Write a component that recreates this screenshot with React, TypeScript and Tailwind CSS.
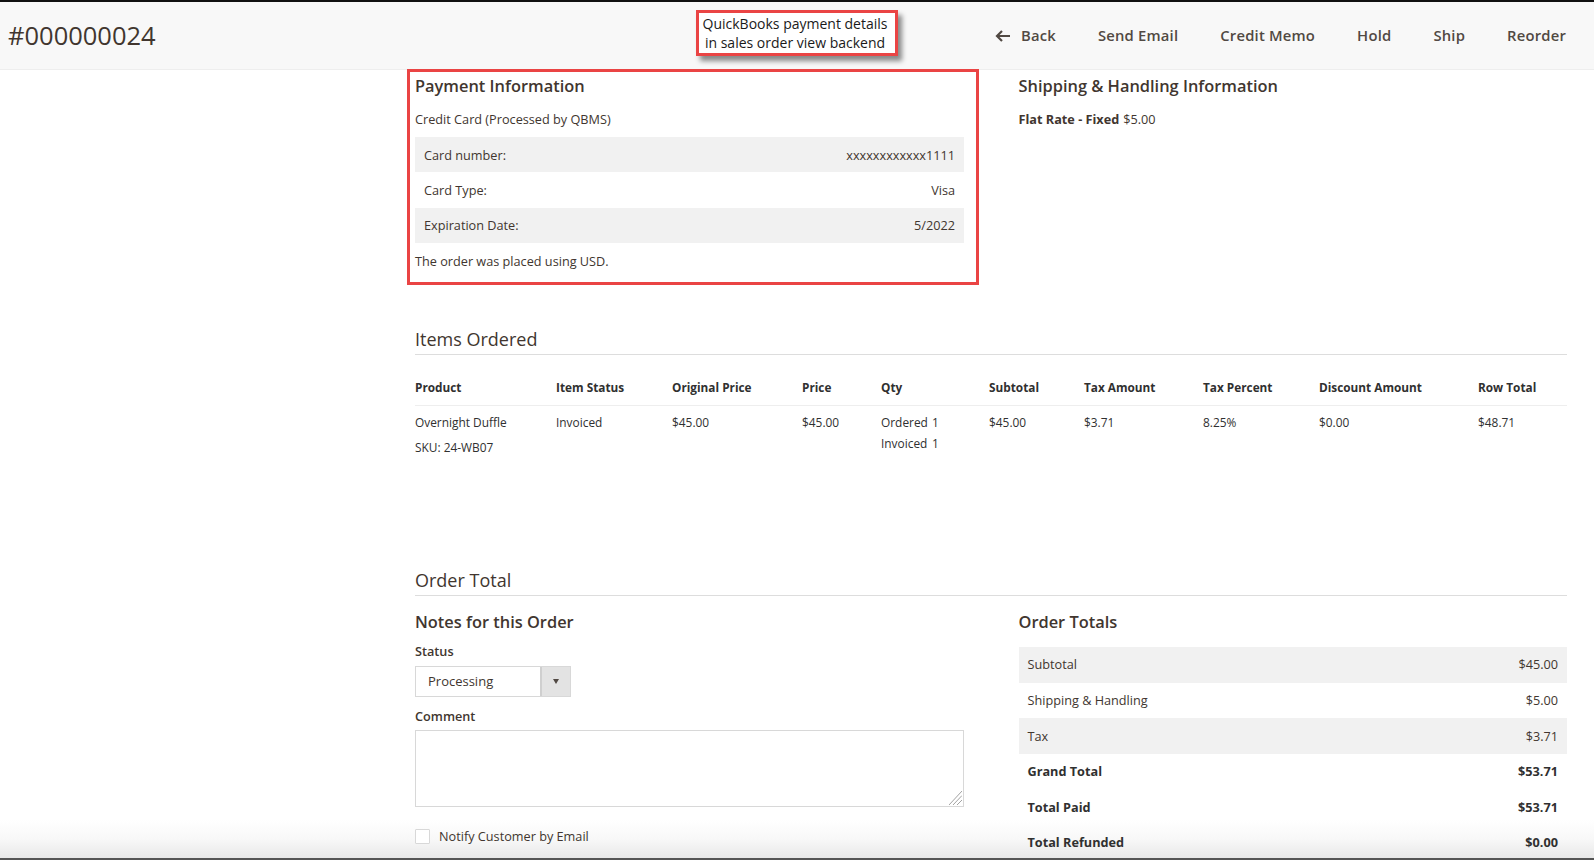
import React from "react";

const F = "font-['Open_Sans',sans-serif]";

function Row({ label, value, shade, bold, tall }: { label: string; value: string; shade?: boolean; bold?: boolean; tall?: boolean }) {
  return (
    <div className={`flex items-center justify-between px-[9px] text-[12.7px] ${tall ? "h-[35.6px]" : "h-[35.4px] pt-[1px]"} ${shade ? "bg-[#f1f1f1]" : ""} ${bold ? "font-bold text-[#303030]" : "text-[#41362f]"}`}>
      <span>{label}</span>
      <span>{value}</span>
    </div>
  );
}

const cols = "grid grid-cols-[141px_116px_130px_79px_108px_95px_119px_116px_159px_1fr]";

export default function App() {
  return (
    <div className={`${F} relative h-[860px] w-[1594px] overflow-hidden bg-white text-[12.7px] text-[#303030]`}>
      <div className="pointer-events-none absolute inset-x-0 bottom-0 h-[40px] border-b-2 border-[#555555] bg-gradient-to-b from-transparent via-[#f8f8f8] to-[#e8e8e8]" />

      <header className="relative flex h-[70px] items-center justify-between border-t-2 border-b border-t-[#111111] border-b-[#eeeeee] bg-[#f8f8f8] pl-[8px] pr-[28px]">
        <h1 className="text-[25.5px] leading-none text-[#41362f]">#000000024</h1>
        <nav className="flex items-center gap-[42px] text-[14.8px] font-semibold tracking-[0.2px] text-[#514943]">
          <span className="flex items-center gap-[11px]">
            <svg width="15" height="12" viewBox="0 0 15 12" fill="none" stroke="#514943" strokeWidth="2.2">
              <path d="M2 6h13M7 1 2 6l5 5" />
            </svg>
            Back
          </span>
          <span>Send Email</span>
          <span>Credit Memo</span>
          <span>Hold</span>
          <span>Ship</span>
          <span>Reorder</span>
        </nav>
      </header>

      <main className="relative pl-[415px] pr-[27px]">
        <section className="flex">
          <div className="w-[549px]">
            <h2 className="flex h-[33px] items-center text-[16.4px] font-semibold text-[#41362f]">Payment Information</h2>
            <p className="flex h-[34px] items-center text-[#41362f]">Credit Card (Processed by QBMS)</p>
            <Row label="Card number:" value="xxxxxxxxxxxx1111" shade />
            <Row label="Card Type:" value="Visa" />
            <Row label="Expiration Date:" value="5/2022" shade />
            <p className="flex h-[36px] items-center text-[#41362f]">The order was placed using USD.</p>
          </div>
          <div className="ml-[54.5px] flex-1">
            <h2 className="flex h-[33px] items-center text-[16.4px] font-semibold text-[#41362f]">Shipping &amp; Handling Information</h2>
            <p className="flex h-[34px] items-center text-[#41362f]">
              <strong className="mr-[4px] font-bold">Flat Rate - Fixed</strong> $5.00
            </p>
          </div>
        </section>

        <section className="mt-[42px]">
          <h2 className="flex h-[34px] items-center border-b border-[#dddddd] pt-[3px] text-[18px] text-[#41362f]">Items Ordered</h2>
          <div className={`${cols} mt-[24px] h-[27px] border-b border-[#eeeeee] text-[11.8px] font-bold leading-[16px] text-[#303030]`}>
            <span>Product</span>
            <span>Item Status</span>
            <span>Original Price</span>
            <span>Price</span>
            <span>Qty</span>
            <span>Subtotal</span>
            <span>Tax Amount</span>
            <span>Tax Percent</span>
            <span>Discount Amount</span>
            <span>Row Total</span>
          </div>
          <div className={`${cols} pt-[8px] text-[11.9px] leading-[16px] text-[#303030]`}>
            <div>
              <div>Overnight Duffle</div>
              <div className="mt-[9px]">SKU: 24-WB07</div>
            </div>
            <span>Invoiced</span>
            <span>$45.00</span>
            <span>$45.00</span>
            <div>
              <div className="flex">
                <span className="w-[51px]">Ordered</span>
                <span>1</span>
              </div>
              <div className="mt-[5px] flex">
                <span className="w-[51px]">Invoiced</span>
                <span>1</span>
              </div>
            </div>
            <span>$45.00</span>
            <span>$3.71</span>
            <span>8.25%</span>
            <span>$0.00</span>
            <span>$48.71</span>
          </div>
        </section>

        <section className="mt-[107px]">
          <h2 className="flex h-[34px] items-center border-b border-[#dddddd] pt-[3px] text-[18px] text-[#41362f]">Order Total</h2>
          <div className="flex">
            <div className="w-[549px]">
              <h2 className="flex h-[46px] items-center pt-[6px] text-[16.4px] font-semibold text-[#41362f]">Notes for this Order</h2>
              <label className="block text-[12.7px] font-semibold leading-[18px] text-[#41362f]">Status</label>
              <div className="mt-[6px] flex h-[31px] w-[156px] border border-[#d8d8d8] bg-white">
                <span className="flex flex-1 items-center pl-[12px] text-[13px] text-[#41362f]">Processing</span>
                <span className="flex w-[30px] items-center justify-center border-l-2 border-[#cfcfcf] bg-[#e3e3e3]">
                  <span className="h-0 w-0 border-x-[3.5px] border-t-[5px] border-x-transparent border-t-[#514943]" />
                </span>
              </div>
              <label className="mt-[10px] block text-[12.7px] font-semibold leading-[18px] text-[#41362f]">Comment</label>
              <div className="relative mt-[5px] h-[77px] border border-[#d8d8d8] bg-white">
                <svg className="absolute bottom-[1px] right-[1px]" width="13" height="15" viewBox="0 0 13 15" stroke="#8a8a8a" strokeWidth="0.8" fill="none">
                  <path d="M0 15 13 1M4 15 13 5.5M8 15 13 10" />
                </svg>
              </div>
              <div className="mt-[20px] flex items-center gap-[9px]">
                <span className="h-[15px] w-[15px] rounded-[1px] border border-[#d8d8d8] bg-white" />
                <span className="text-[12.7px] text-[#41362f]">Notify Customer by Email</span>
              </div>
            </div>
            <div className="ml-[54.5px] flex-1">
              <h2 className="flex h-[51px] items-center pt-[1px] text-[16.4px] font-semibold text-[#41362f]">Order Totals</h2>
              <Row tall label="Subtotal" value="$45.00" shade />
              <Row tall label="Shipping & Handling" value="$5.00" />
              <Row tall label="Tax" value="$3.71" shade />
              <Row tall label="Grand Total" value="$53.71" bold />
              <Row tall label="Total Paid" value="$53.71" bold />
              <Row tall label="Total Refunded" value="$0.00" bold />
            </div>
          </div>
        </section>
      </main>

      <div className="absolute left-[407px] top-[69px] h-[216px] w-[572px] border-[3px] border-[#ea4444]" />
      <div className="absolute left-[696px] top-[10px] flex h-[46px] w-[202px] flex-col items-center justify-center border-[3px] border-[#ea4444] bg-white pb-[1px] pr-[4px] text-[14px] leading-[19px] text-[#1a1a1a] shadow-[4px_5px_5px_rgba(0,0,0,0.45)]">
        <span>QuickBooks payment details</span>
        <span>in sales order view backend</span>
      </div>
    </div>
  );
}
